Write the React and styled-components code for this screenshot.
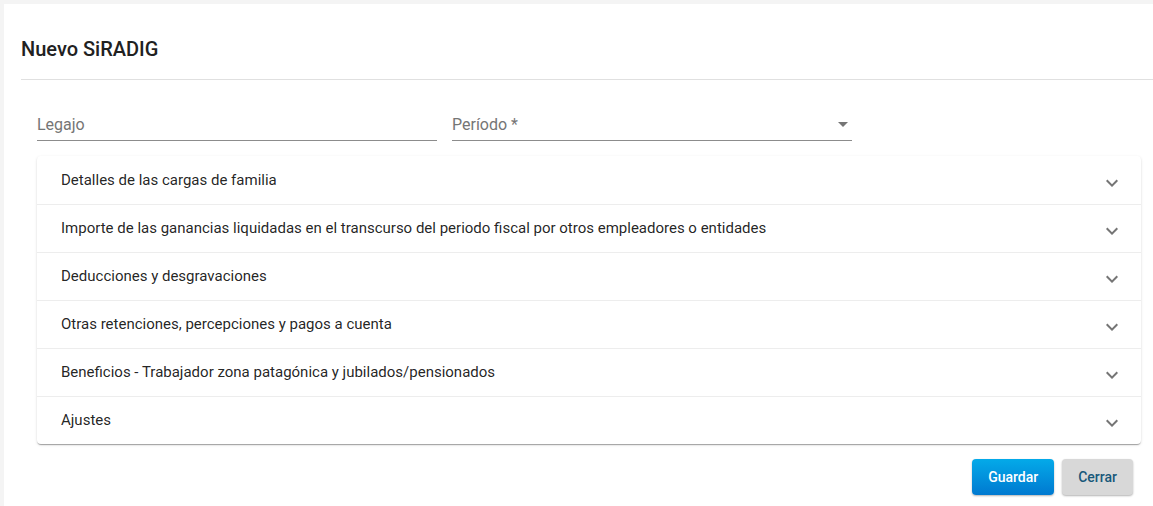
import React from "react";
import styled, { createGlobalStyle } from "styled-components";

const GlobalStyle = createGlobalStyle`
  html, body {
    margin: 0;
    padding: 0;
    background: #f4f4f4;
    overflow: hidden;
    font-family: Roboto, "Liberation Sans", sans-serif;
  }
`;

const Card = styled.div`
  margin: 4px 0 0 4px;
  background: #fff;
  min-height: 520px;
`;

const Header = styled.div`
  padding: 33px 0 18px 0;
  border-bottom: 1px solid #e0e0e0;
  margin-left: 17px;
`;

const Title = styled.h2`
  margin: 0;
  font-size: 20px;
  line-height: 24px;
  font-weight: 500;
  color: #212121;
`;

const Body = styled.div`
  padding: 28px 12px 0 33px;
`;

const Fields = styled.div`
  display: flex;
  gap: 15px;
`;

const Field = styled.div`
  width: 400px;
  padding: 5px 0 4px;
  line-height: 23px;
  font-size: 16px;
  color: #757575;
  border-bottom: 1px solid #8c8c8c;
  display: flex;
  align-items: center;
  justify-content: space-between;
`;

const Caret = styled.span`
  width: 0;
  height: 0;
  margin-right: 4px;
  border-left: 5px solid transparent;
  border-right: 5px solid transparent;
  border-top: 5px solid #757575;
`;

const Panels = styled.div`
  margin-top: 15px;
  border-radius: 4px;
  box-shadow: 0px 2px 1px -1px rgba(0, 0, 0, 0.2),
    0px 1px 1px 0px rgba(0, 0, 0, 0.14), 0px 1px 3px 0px rgba(0, 0, 0, 0.12);
  background: #fff;
`;

const Panel = styled.div`
  height: 48px;
  display: flex;
  align-items: center;
  justify-content: space-between;
  padding: 0 17px 0 24px;
  box-shadow: ${(p) => (p.$first ? "none" : "inset 0 1px 0 rgba(0,0,0,0.07)")};
  font-size: 15px;
  color: rgba(0, 0, 0, 0.87);
`;

const Chevron = styled.svg`
  width: 24px;
  height: 24px;
  fill: #757575;
  margin-top: 6px;
`;

const Actions = styled.div`
  display: flex;
  justify-content: flex-end;
  gap: 8px;
  padding: 15px 8px 0 0;
`;

const Button = styled.button`
  height: 36px;
  padding: 0 16px;
  border: none;
  border-radius: 4px;
  font-family: Roboto, "Liberation Sans", sans-serif;
  font-size: 14px;
  font-weight: 500;
  cursor: pointer;
  box-shadow: 0 1px 2px rgba(0, 0, 0, 0.3);
  color: ${(p) => (p.$primary ? "#fff" : "#17587a")};
  background: ${(p) =>
    p.$primary ? "linear-gradient(#04aae9, #0079d0)" : "#d8d8d8"};
`;

const sections = [
  "Detalles de las cargas de familia",
  "Importe de las ganancias liquidadas en el transcurso del periodo fiscal por otros empleadores o entidades",
  "Deducciones y desgravaciones",
  "Otras retenciones, percepciones y pagos a cuenta",
  "Beneficios - Trabajador zona patagónica y jubilados/pensionados",
  "Ajustes",
];

export default function App() {
  return (
    <>
      <GlobalStyle />
      <Card>
        <Header>
          <Title>Nuevo SiRADIG</Title>
        </Header>
        <Body>
          <Fields>
            <Field>Legajo</Field>
            <Field>
              Período *
              <Caret />
            </Field>
          </Fields>
          <Panels>
            {sections.map((s, i) => (
              <Panel key={s} $first={i === 0}>
                {s}
                <Chevron viewBox="0 0 24 24">
                  <path d="M16.59 8.59 12 13.17 7.41 8.59 6 10l6 6 6-6z" />
                </Chevron>
              </Panel>
            ))}
          </Panels>
          <Actions>
            <Button $primary>Guardar</Button>
            <Button>Cerrar</Button>
          </Actions>
        </Body>
      </Card>
    </>
  );
}
